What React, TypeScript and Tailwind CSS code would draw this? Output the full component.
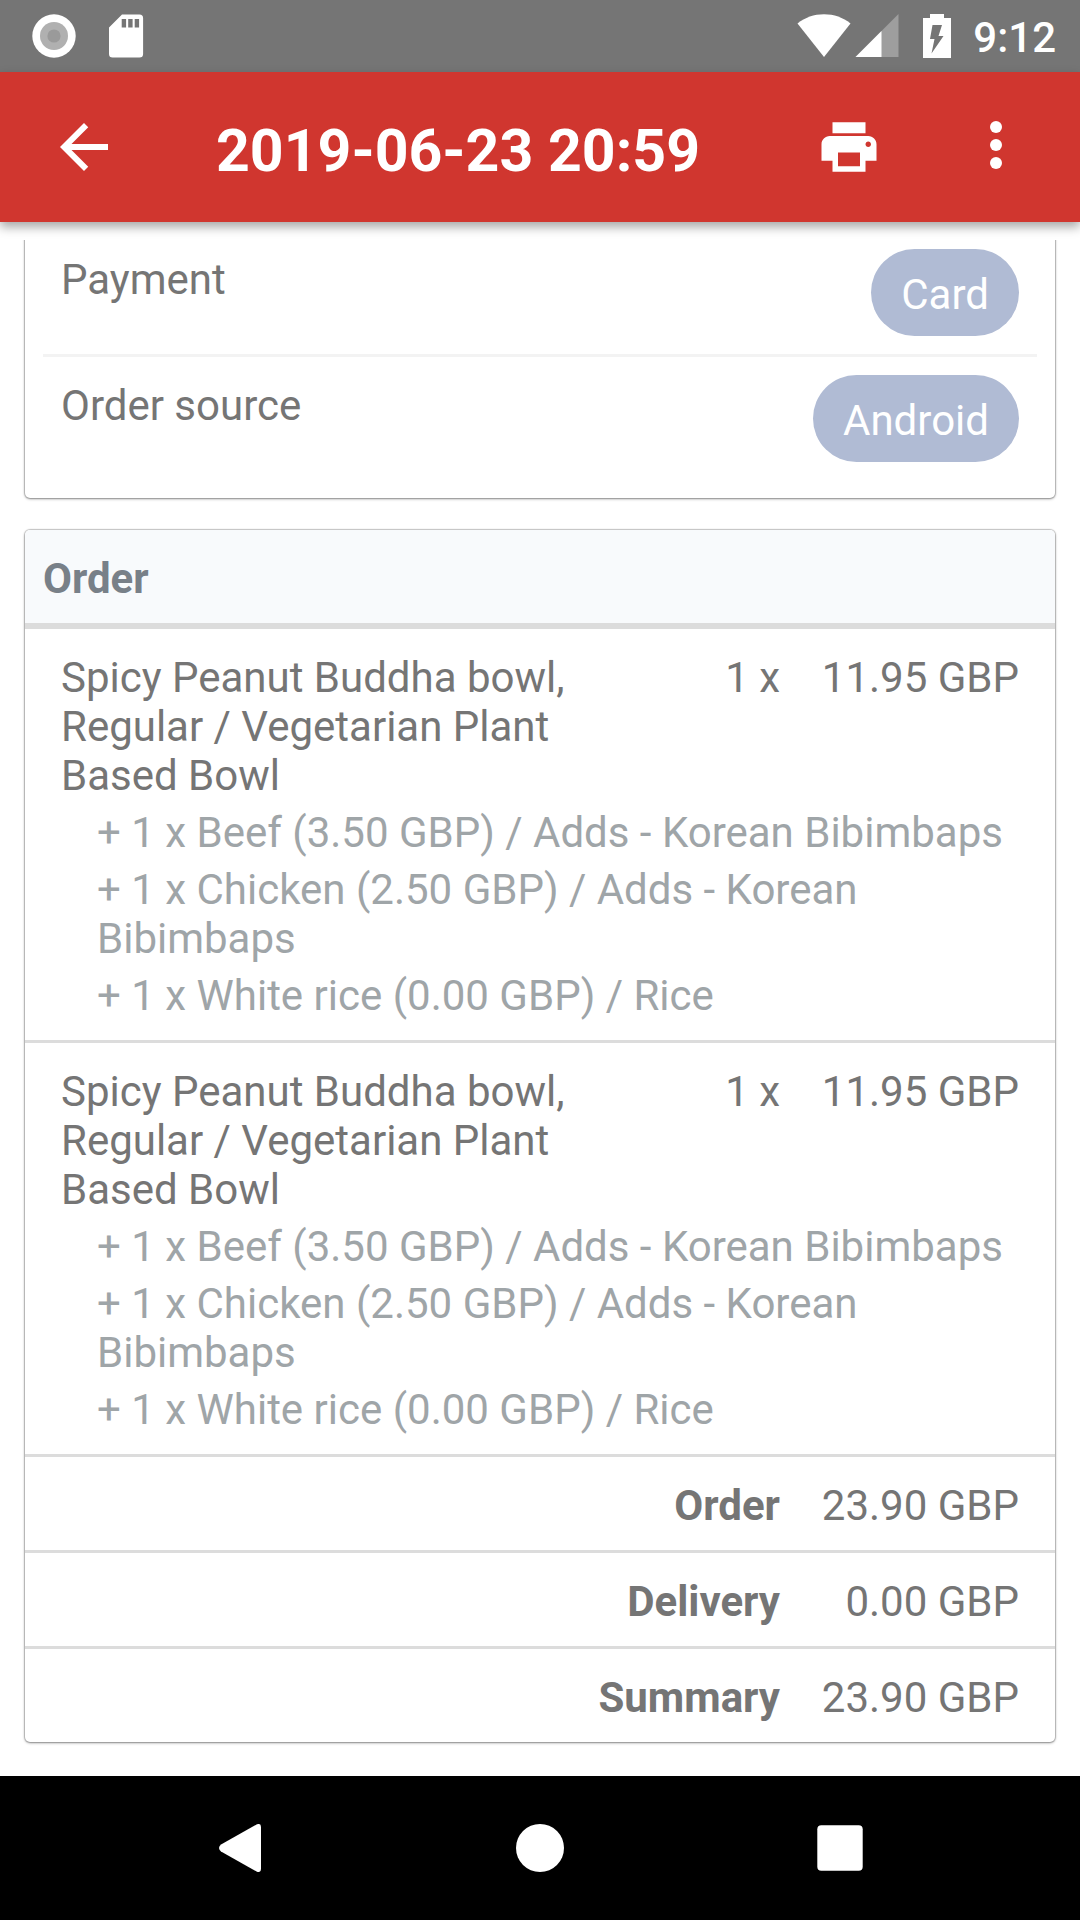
import React from "react";

type Item = { name: string; quantity: string; price: string; addons: string[] };

const bowl: Item = {
  name: "Spicy Peanut Buddha bowl, Regular / Vegetarian Plant Based Bowl",
  quantity: "1 x",
  price: "11.95 GBP",
  addons: [
    "+ 1 x Beef (3.50 GBP) / Adds - Korean Bibimbaps",
    "+ 1 x Chicken (2.50 GBP) / Adds - Korean Bibimbaps",
    "+ 1 x White rice (0.00 GBP) / Rice",
  ],
};

const items: Item[] = [bowl, { ...bowl }];

const totals = [
  { label: "Order", value: "23.90 GBP" },
  { label: "Delivery", value: "0.00 GBP" },
  { label: "Summary", value: "23.90 GBP" },
];

const details = [
  { label: "Payment", value: "Card" },
  { label: "Order source", value: "Android" },
];

const cardClass =
  "mx-[25px] rounded-[5px] bg-white shadow-[0_0_1px_1px_rgba(0,0,0,0.2),0_1px_3px_rgba(0,0,0,0.35)]";

function StatusBar() {
  return (
    <div className="flex h-[72px] items-center justify-between bg-[#757575] pr-6 pl-8 text-white">
      <div className="flex items-center gap-8">
        <svg className="size-11" viewBox="0 0 44 44" aria-hidden="true">
          <circle cx="22" cy="22" r="21.7" fill="#fff" />
          <circle cx="22" cy="22" r="14" fill="#b0b0b0" />
          <circle cx="22" cy="22" r="6.6" fill="#9a9a9a" />
        </svg>
        <svg className="h-11 w-9" viewBox="0 0 36 44" aria-hidden="true">
          <path
            fill="#fff"
            fillRule="evenodd"
            d="M14 .4H31.5a3.6 3.6 0 0 1 3.6 3.6V40a3.6 3.6 0 0 1-3.6 3.6H4.600A3.600 3.600 0 0 1 1 40V13.500ZM13.700 5v8.500h4.400V5ZM20.200 5v8.500h4.400V5ZM26.700 5v8.500h4.400V5Z"
          />
        </svg>
      </div>
      <div className="flex items-center">
        <svg className="h-11 w-[54px]" viewBox="0 0 54 44" aria-hidden="true">
          <path fill="#fff" d="M27 43 .5 9.500C8 3.500 17 .3 27 .3s19 3.200 26.500 9.200Z" />
        </svg>
        <svg className="ml-1 h-11 w-11" viewBox="0 0 44 44" aria-hidden="true">
          <path fill="#9e9e9e" d="M43.500 0V43H.5Z" />
          <path fill="#fff" d="M26.500 17V43H.5Z" />
        </svg>
        <svg className="ml-6 h-11 w-7" viewBox="0 0 28 44" aria-hidden="true">
          <path
            fill="#fff"
            fillRule="evenodd"
            d="M7 0H21V4H28V44H0V4H7ZM9.500 11 7 25h4.500L8.500 39.500 20.500 22H15.500L19 11Z"
          />
        </svg>
        <span className="ml-[22px] pt-0.5 text-[42px] leading-[49px] font-medium">9:12</span>
      </div>
    </div>
  );
}

function AppBar() {
  return (
    <header className="relative z-10 flex h-[150px] items-center bg-[#d0362f] pr-12 pl-12 text-white shadow-[0_5px_10px_rgba(0,0,0,0.35)]">
      <button type="button" aria-label="Back">
        <svg className="size-[72px]" viewBox="0 0 24 24" fill="currentColor">
          <path d="M20 11H7.830l5.590-5.590L12 4l-8 8 8 8 1.410-1.410L7.830 13H20v-2z" />
        </svg>
      </button>
      <h1 className="ml-24 flex-1 pt-2 text-[59px] leading-[70px] font-bold whitespace-nowrap">
        2019-06-23 20:59
      </h1>
      <button type="button" aria-label="Print">
        <svg className="size-[66px]" viewBox="0 0 24 24" fill="currentColor">
          <path d="M19 8H5c-1.660 0-3 1.340-3 3v6h4v4h12v-4h4v-6c0-1.660-1.340-3-3-3zm-3 11H8v-5h8v5zm3-7c-.55 0-1-.45-1-1s.45-1 1-1 1 .45 1 1-.45 1-1 1zm-1-9H6v4h12V3z" />
        </svg>
      </button>
      <button type="button" aria-label="More options" className="ml-[78px]">
        <svg className="size-[72px]" viewBox="0 0 72 72" fill="currentColor">
          <circle cx="36" cy="16" r="6" />
          <circle cx="36" cy="34" r="6" />
          <circle cx="36" cy="52" r="6" />
        </svg>
      </button>
    </header>
  );
}

function DetailsCard() {
  return (
    <section className={`${cardClass} -mt-[27px] p-[18px]`}>
      <dl className="divide-y-[3px] divide-[#f3f3f3]">
        {details.map((d) => (
          <div key={d.label} className="flex items-start justify-between p-[18px]">
            <dt className="pt-1.5">{d.label}</dt>
            <dd className="rounded-full bg-[#b0bbd4] px-[30px] pt-[21px] pb-[17px] text-white">
              {d.value}
            </dd>
          </div>
        ))}
      </dl>
    </section>
  );
}

function OrderCard() {
  return (
    <section className={`${cardClass} mt-8 overflow-hidden`}>
      <h2 className="border-b-[6px] border-[#dcdcdc] bg-[#f8fafc] px-[18px] pt-6 pb-5 font-bold text-[#788088]">
        Order
      </h2>
      <table className="w-full table-fixed border-separate border-spacing-0">
        <colgroup>
          <col />
          <col className="w-[200px]" />
          <col className="w-[275px]" />
        </colgroup>
        {items.map((item, i) => (
          <tbody key={i} className="align-top">
            <tr>
              <td className="pt-6 pl-9">{item.name}</td>
              <td className="pt-6 text-right">{item.quantity}</td>
              <td className="pt-6 pr-9 text-right">{item.price}</td>
            </tr>
            <tr>
              <td colSpan={3} className="border-b-[3px] border-[#dcdcdc] pr-9 pb-5 pl-[72px] text-[#9fa5a8]">
                <ul>
                  {item.addons.map((a) => (
                    <li key={a} className="pt-2">
                      {a}
                    </li>
                  ))}
                </ul>
              </td>
            </tr>
          </tbody>
        ))}
        <tbody>
          {totals.map((t) => (
            <tr key={t.label} className="group">
              <th
                scope="row"
                colSpan={2}
                className="border-b-[3px] border-[#dcdcdc] pt-6 pb-5 text-right font-bold group-last:border-b-0"
              >
                {t.label}
              </th>
              <td className="border-b-[3px] border-[#dcdcdc] pt-6 pr-9 pb-5 text-right group-last:border-b-0">
                {t.value}
              </td>
            </tr>
          ))}
        </tbody>
      </table>
    </section>
  );
}

function NavigationBar() {
  return (
    <nav className="flex h-36 items-center bg-black px-[90px] text-white">
      <button type="button" aria-label="System back" className="flex flex-1 justify-center">
        <svg className="size-12" viewBox="0 0 48 48" fill="currentColor">
          <path d="M41 .3Q45 -1 45 3V45Q45 49 41 47.700L5 27.500Q1 24 5 20.500Z" />
        </svg>
      </button>
      <button type="button" aria-label="Home" className="flex flex-1 justify-center">
        <svg className="size-12" viewBox="0 0 48 48" fill="currentColor">
          <circle cx="24" cy="24" r="24" />
        </svg>
      </button>
      <button type="button" aria-label="Recent apps" className="flex flex-1 justify-center">
        <svg className="size-12" viewBox="0 0 48 48" fill="currentColor">
          <rect x="1.300" y="1.300" width="45.400" height="45.400" rx="4" />
        </svg>
      </button>
    </nav>
  );
}

export default function App() {
  return (
    <div className="flex min-h-screen flex-col bg-white font-[Roboto,sans-serif] text-[42px] leading-[49px] text-[#757575]">
      <StatusBar />
      <AppBar />
      <main className="mt-[18px] flex-1 overflow-hidden pb-[34px]">
        <DetailsCard />
        <OrderCard />
      </main>
      <NavigationBar />
    </div>
  );
}
